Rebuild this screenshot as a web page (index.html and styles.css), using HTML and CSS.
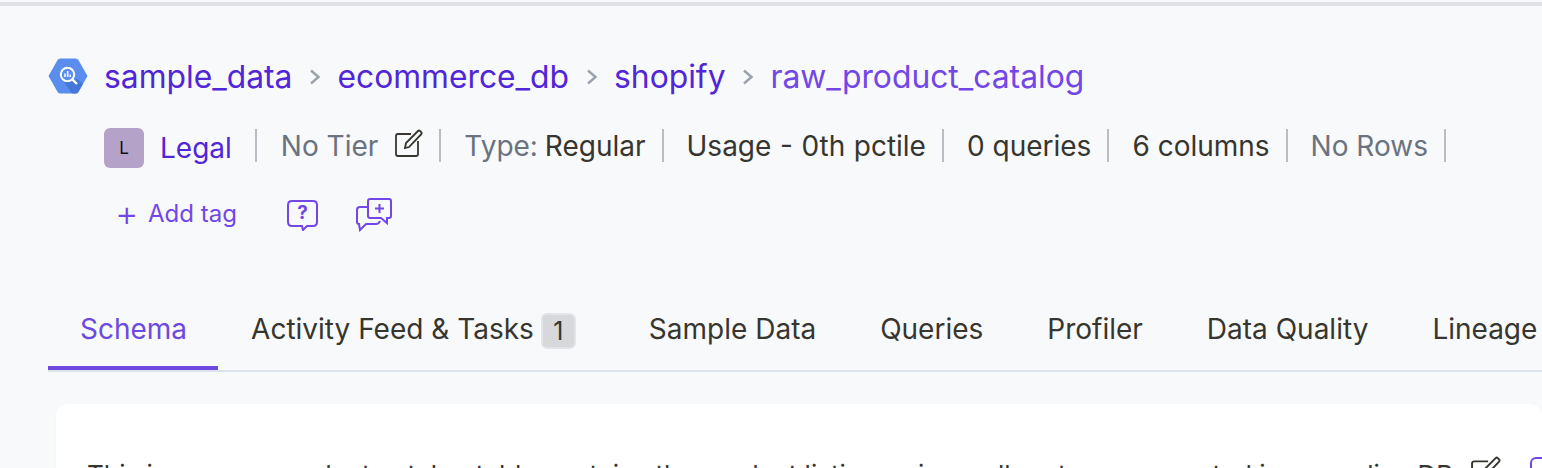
FILE: index.html
```html
<!DOCTYPE html>
<html lang="en">
  <head>
    <title>raw_product_catalog</title>
    <meta charset="utf-8">
    <link rel="stylesheet" href="styles.css">
  </head>
  <body>
    <div class="topline"></div>
    <div class="page">

      <div class="crumbs">
        <svg class="bq-icon" width="40" height="36" viewBox="0 0 40 36">
          <path d="M0.500 18 9.600 2Q10.400 0.500 12.400 0.500H27.600Q29.600 0.500 30.400 2L39.500 18 30.400 34Q29.600 35.500 27.600 35.500H12.400Q10.400 35.500 9.600 34Z" fill="#5a8dee"/>
          <path d="M24 22 16 24 24 35.500H27.600Q29.600 35.500 30.400 34L35 26 29 21Z" fill="#4478d8"/>
          <circle cx="19.500" cy="16.500" r="6.700" fill="none" stroke="#fff" stroke-width="2"/>
          <path d="M24.300 21.300 29 26" stroke="#fff" stroke-width="2.400"/>
          <path d="M17 15.500V19M19.700 13V19M22.200 16.500V19" stroke="#fff" stroke-width="1.500"/>
        </svg>
        <a class="crumb">sample_data</a>
        <svg class="chev" width="14" height="20" viewBox="0 0 14 20"><path d="M3 3.500 10.500 10 3 16.500" fill="none" stroke="#9ca3af" stroke-width="2.500"/></svg>
        <a class="crumb">ecommerce_db</a>
        <svg class="chev" width="14" height="20" viewBox="0 0 14 20"><path d="M3 3.500 10.500 10 3 16.500" fill="none" stroke="#9ca3af" stroke-width="2.500"/></svg>
        <a class="crumb">shopify</a>
        <svg class="chev" width="14" height="20" viewBox="0 0 14 20"><path d="M3 3.500 10.500 10 3 16.500" fill="none" stroke="#9ca3af" stroke-width="2.500"/></svg>
        <a class="crumb crumb-last">raw_product_catalog</a>
      </div>

      <div class="meta">
        <span class="avatar">L</span>
        <a class="owner">Legal</a>
        <span class="item item-tier muted">No Tier<svg class="edit" width="28" height="28" viewBox="0 0 28 28"><path d="M16 5H3Q1 5 1 7V25Q1 27 3 27H21Q23 27 23 25V12" fill="none" stroke="#37352f" stroke-width="1.800"/><path d="M10 19 11 14 23 2Q24 1 25 2L26.500 3.500Q27 4.500 26 5.500L14 18Z" fill="none" stroke="#37352f" stroke-width="1.800"/></svg></span>
        <span class="item muted">Type: <b>Regular</b></span>
        <span class="item item-usage dark">Usage - 0th pctile</span>
        <span class="item dark">0 queries</span>
        <span class="item dark">6 columns</span>
        <span class="item muted">No Rows</span>
      </div>

      <div class="actions">
        <a class="add-tag"><span class="plus">+</span>Add tag</a>
        <svg class="ask" width="32" height="32" viewBox="0 0 32 32">
          <path d="M5 2H26Q30 2 30 6V23Q30 27 26 27H20L16 31 15 27H5Q1 27 1 23V6Q1 2 5 2Z" fill="none" stroke="#7147e8" stroke-width="2"/>
          <text x="15.500" y="20" text-anchor="middle" class="ask-mark">?</text>
        </svg>
        <svg class="chat" width="38" height="34" viewBox="0 0 38 34">
          <path d="M13 3Q13 1 15 1H34Q36 1 36 3V18Q36 20 34 20H32L32 25 26 20H15Q13 20 13 18Z" fill="none" stroke="#7147e8" stroke-width="2"/>
          <path d="M24.500 6V15M20 10.500H29" stroke="#7147e8" stroke-width="2"/>
          <path d="M13 9H5Q2 9 2 12V24Q2 26 4 26L5 32 11 26H21Q24 26 25 23" fill="none" stroke="#7147e8" stroke-width="2"/>
        </svg>
      </div>

      <div class="tabs">
        <a class="tab active">Schema</a>
        <a class="tab tab-count">Activity Feed &amp; Tasks<span class="count">1</span></a>
        <a class="tab">Sample Data</a>
        <a class="tab">Queries</a>
        <a class="tab">Profiler</a>
        <a class="tab">Data Quality</a>
        <a class="tab">Lineage</a>
      </div>

      <div class="card">
        <span class="desc">This is our raw product catalog table contains the product listing, price, seller etc.. represented in our online DB.</span>
        <svg class="edit" width="30" height="30" viewBox="0 0 28 28"><path d="M16 5H3Q1 5 1 7V25Q1 27 3 27H21Q23 27 23 25V12" fill="none" stroke="#37352f" stroke-width="1.800"/><path d="M10 19 11 14 23 2Q24 1 25 2L26.500 3.500Q27 4.500 26 5.500L14 18Z" fill="none" stroke="#37352f" stroke-width="1.800"/></svg>
        <span class="task-icon"></span>
      </div>

    </div>
  </body>
</html>
```

FILE: styles.css
```css
html, body {
  height: 100%;
}

body {
  margin: 0;
  background: #f8f9fa;
  color: #37352f;
  font-family: Inter, sans-serif;
  font-size: 28px;
  overflow: hidden;
}

a {
  text-decoration: none;
}

.topline {
  height: 4px;
  margin-top: 2px;
  background: #dfe0e3;
}

.page {
  padding: 0 0 0 48px;
  overflow: hidden;
}

.crumbs {
  display: flex;
  align-items: center;
  margin-top: 50px;
  height: 40px;
  font-size: 31.8px;
}

.bq-icon {
  margin-right: 16px;
}

.crumb {
  color: #5026d8;
}

.crumb-last {
  color: #7147e8;
}

.chev {
  margin: 2px 15.5px 0;
}

.meta {
  display: flex;
  align-items: flex-start;
  margin: 32px 0 0 56px;
  height: 40px;
}

.avatar {
  width: 40px;
  height: 40px;
  border-radius: 6px;
  background: #b5a2c9;
  color: #111;
  font-size: 17px;
  display: flex;
  align-items: center;
  justify-content: center;
}

.owner {
  margin: 3px 23px 0 16px;
  color: #5026d8;
  line-height: 34px;
}

.item {
  margin-top: 1px;
  height: 33px;
  line-height: 35px;
  padding: 0 16px 0 23px;
  border-right: 2px solid #b9bdc4;
  white-space: nowrap;
}

.item-tier {
  display: flex;
  align-items: flex-start;
  gap: 17px;
  padding: 0 16px 0 24px;
  border-left: 2px solid #b9bdc4;
}

.item-usage {
  word-spacing: 0.7px;
}

.muted {
  color: #6b7280;
}

.dark {
  color: #37352f;
}

.muted b {
  margin-left: -1px;
  font-weight: 400;
  color: #37352f;
}

.actions {
  display: flex;
  align-items: center;
  margin: 23px 0 0 68px;
  height: 48px;
}

.add-tag {
  display: flex;
  align-items: center;
  margin-bottom: 4px;
  color: #7147e8;
  font-size: 24px;
}

.plus {
  width: 32px;
  margin-left: -1px;
  margin-right: 1px;
  font-size: 36px;
  font-weight: 300;
  line-height: 1;
}

.ask {
  margin-left: 50px;
}

.ask-mark {
  fill: #7147e8;
  font-size: 19px;
  font-weight: 700;
}

.chat {
  margin-left: 36px;
}

.tabs {
  display: flex;
  margin-top: 63px;
  height: 68px;
  border-bottom: 2px solid #dde3ea;
}

.tab {
  flex: none;
  display: flex;
  align-items: flex-start;
  box-sizing: border-box;
  height: 68px;
  padding: 10px 32px 0;
  color: #37352f;
  white-space: nowrap;
}

.tab.active {
  padding: 10px 31px 0 32px;
  color: #6c4adf;
  border-bottom: 4px solid #6c4adf;
}

.tab-count {
  padding-left: 33px;
  padding-right: 41px;
}

.count {
  margin: 1px 0 0 7px;
  width: 35px;
  height: 36px;
  border-radius: 6px;
  background: #d6d8dc;
  border: 2px solid #e3e4e7;
  box-sizing: border-box;
  font-size: 25px;
  line-height: 32px;
  text-align: center;
}

.card {
  display: flex;
  align-items: flex-start;
  margin: 32px 0 0 8px;
  padding: 55px 0 0 31px;
  background: #fff;
  border-radius: 12px;
  height: 200px;
  box-shadow: 0 1px 3px rgba(0, 0, 0, 0.04);
}

.desc {
  flex: none;
  width: 1362px;
  white-space: nowrap;
  font-size: 26px;
}

.card .edit {
  flex: none;
  margin: -3px 0 0 22px;
}

.task-icon {
  flex: none;
  width: 30px;
  height: 30px;
  margin: -2px 0 0 29px;
  border: 2px solid #7147e8;
  border-radius: 6px;
}
```
